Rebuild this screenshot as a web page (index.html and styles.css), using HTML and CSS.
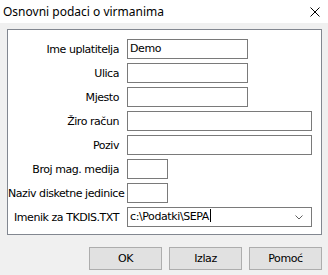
FILE: index.html
```html
<!DOCTYPE html>
<html lang="hr">
<head>
    <meta charset="UTF-8">
    <title>Osnovni podaci o virmanima</title>
    <link rel="stylesheet" href="styles.css">
</head>
<body>
<div class="dialog">
    <!-- Title bar -->
    <div class="titlebar">
        <span class="title">Osnovni podaci o virmanima</span>
        <svg class="close" width="10" height="10" viewBox="0 0 10 10">
            <path d="M0.5 0.5 L9.5 9.5 M9.5 0.5 L0.5 9.5" stroke="#000" stroke-width="1" fill="none"/>
        </svg>
    </div>

    <div class="content">
        <div class="panel">
            <label class="lbl">Ime uplatitelja</label>
            <div class="field medium">Demo</div>

            <label class="lbl">Ulica</label>
            <div class="field medium"></div>

            <label class="lbl">Mjesto</label>
            <div class="field medium"></div>

            <label class="lbl">Žiro račun</label>
            <div class="field wide"></div>

            <label class="lbl">Poziv</label>
            <div class="field wide"></div>

            <label class="lbl">Broj mag. medija</label>
            <div class="field small"></div>

            <label class="lbl">Naziv disketne jedinice</label>
            <div class="field small"></div>

            <label class="lbl">Imenik za TKDIS.TXT</label>
            <div class="field wide combo">
                <span class="combo-text">c:\Podatki\SEPA<span class="caret"></span></span>
                <svg class="chevron" width="8" height="5" viewBox="0 0 8 5">
                    <path d="M0.5 0.5 L4 4 L7.5 0.5" stroke="#606060" stroke-width="1" fill="none"/>
                </svg>
            </div>
        </div>

        <div class="buttons">
            <button class="btn">OK</button>
            <button class="btn">Izlaz</button>
            <button class="btn">Pomoć</button>
        </div>
    </div>
</div>
</body>
</html>
```

FILE: styles.css
```css
body {
    margin: 0;
    background-color: #f0f0f0;
    font-family: "DejaVu Sans", sans-serif;
    color: #000;
}

.dialog {
    width: 328px;
    height: 275px;
    overflow: hidden;
}

/* Title bar */
.titlebar {
    height: 23px;
    background-color: #fff;
    display: flex;
    align-items: center;
    justify-content: space-between;
    padding: 0 8px 0 3px;
}

.title {
    font-family: "Noto Sans", sans-serif;
    font-size: 12px;
    color: #000;
    margin-top: -1px;
}

.close {
    display: block;
}

.content {
    padding: 6px 6px 0 7px;
}

/* Group panel */
.panel {
    background-color: #fff;
    border: 1px solid #828790;
    box-sizing: border-box;
    width: 315px;
    height: 206px;
    display: grid;
    grid-template-columns: 111px 185px;
    grid-auto-rows: 20px;
    row-gap: 4px;
    column-gap: 8px;
    padding-top: 9px;
}

.lbl {
    font-size: 11px;
    letter-spacing: -0.45px;
    text-align: right;
    align-self: center;
    white-space: nowrap;
    color: #000;
}

.field {
    height: 20px;
    box-sizing: border-box;
    border: 1px solid #7a7a7a;
    background-color: #fff;
    font-size: 11px;
    letter-spacing: -0.4px;
    padding: 0 2px;
    line-height: 18px;
}

.medium {
    width: 121px;
}

.wide {
    width: 185px;
}

.small {
    width: 41px;
}

.combo {
    display: flex;
    align-items: center;
    justify-content: space-between;
    padding-right: 8px;
}

.caret {
    display: inline-block;
    width: 1px;
    height: 13px;
    background-color: #000;
    vertical-align: -2px;
    margin-left: 1px;
}

.chevron {
    display: block;
}

/* Buttons */
.buttons {
    display: flex;
    justify-content: flex-end;
    gap: 7px;
    margin-top: 12px;
    width: 315px;
}

.btn {
    width: 73px;
    height: 23px;
    margin: 0;
    background-color: #e1e1e1;
    border: 1px solid #adadad;
    font-family: "DejaVu Sans", sans-serif;
    font-size: 11px;
    font-weight: normal;
    letter-spacing: -0.4px;
    color: #000;
    padding: 0;
}
```
